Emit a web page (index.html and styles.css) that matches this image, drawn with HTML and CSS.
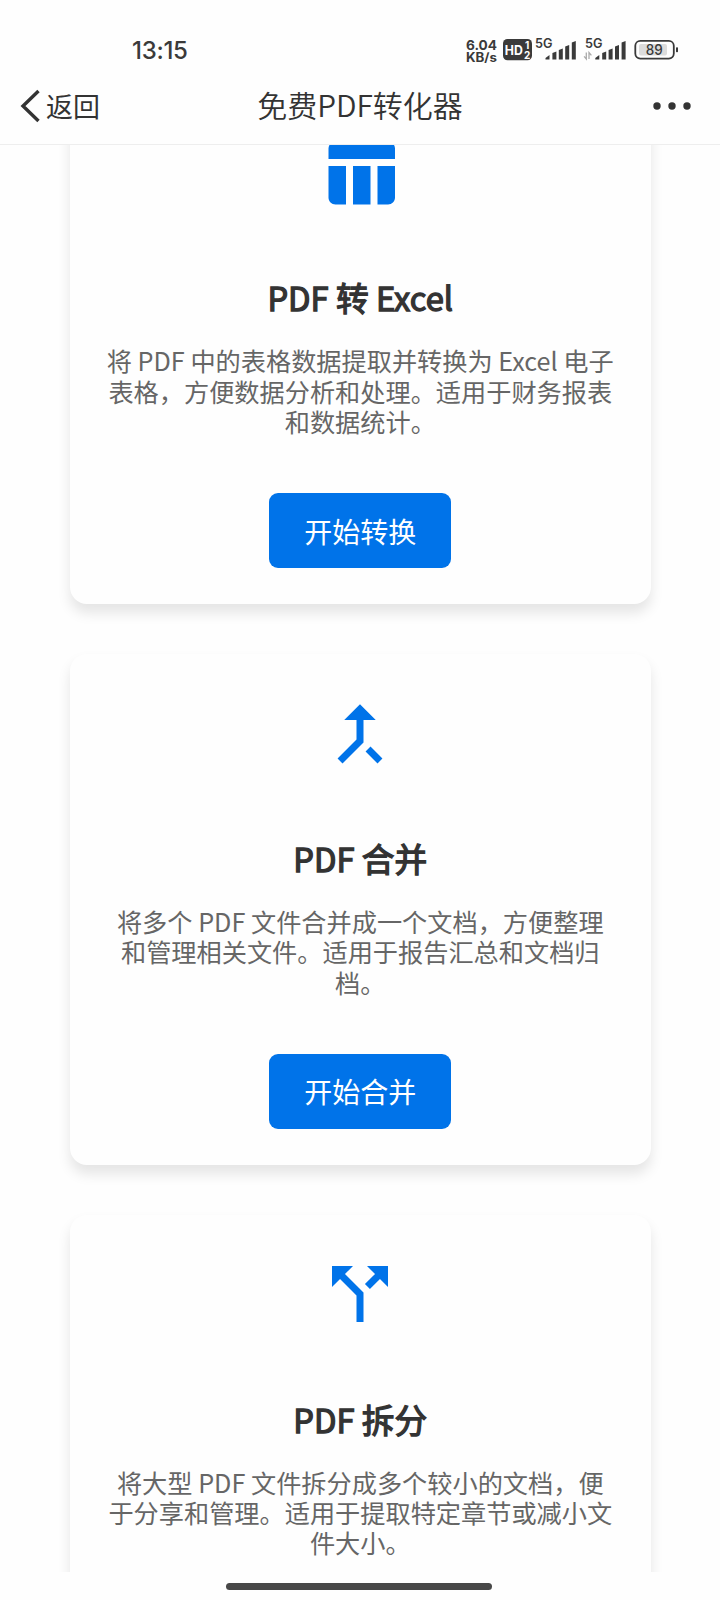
FILE: index.html
```html
<!DOCTYPE html>
<html lang="zh-CN">
<head>
<meta charset="utf-8">
<title>免费PDF转化器</title>
<link rel="stylesheet" href="styles.css">
</head>
<body>
<div class="screen">
  <div class="status">
    <span class="clock">13:15</span>
    <svg class="status-icons" width="216" height="30" viewBox="464 35 216 30" fill="#3a3a3a">
      <g class="tiny">
        <text x="466" y="50.3" font-size="13.5" textLength="31" lengthAdjust="spacingAndGlyphs">6.04</text>
        <text x="466" y="62.2" font-size="12.5" textLength="31" lengthAdjust="spacingAndGlyphs">KB/s</text>
      </g>
      <rect x="503" y="39" width="29" height="21.3" rx="4.5"/>
      <g class="tiny" fill="#fff">
        <text x="504.8" y="54.5" font-size="13" textLength="18" lengthAdjust="spacingAndGlyphs">HD</text>
        <text x="525" y="48.6" font-size="10">1</text>
        <text x="524" y="58.6" font-size="10">2</text>
      </g>
      <g class="tiny medium">
        <text x="535" y="48.3" font-size="13" textLength="17.5" lengthAdjust="spacingAndGlyphs">5G</text>
        <text x="585" y="48.3" font-size="13" textLength="17.5" lengthAdjust="spacingAndGlyphs">5G</text>
      </g>
      <path id="bars" d="M545.5 59.5v-1.500l4-3v4.500zM552.400 59.500v-6.500l4-1.500v8zM558.800 59.500v-9.500l4-1.500v11zM565.200 59.500v-13l4-1.500v14.500zM571.800 59.500v-17l4-1.600v18.600z"/>
      <use href="#bars" x="49.800"/>
      <path d="M586.300 52.500v6.500l-2.200-2.600M589 59v-6.500l2.400 2.800" fill="none" stroke="#aaa" stroke-width="1.300"/>
      <rect x="635.300" y="40.800" width="38.500" height="17.800" rx="5" fill="none" stroke="#3a3a3a" stroke-width="1.800"/>
      <rect x="639" y="44" width="28" height="11.500" rx="2" fill="#dcdcdc"/>
      <rect x="676" y="47.300" width="2" height="5" rx=".8"/>
      <text class="tiny level" x="645.700" y="55" font-size="14.500" textLength="17" lengthAdjust="spacingAndGlyphs">89</text>
    </svg>
  </div>
  <header class="nav">
    <div class="back">
      <svg width="20" height="34" viewBox="0 0 20 34" fill="none" stroke="#333" stroke-width="3.400"><path d="M18.500 2L3 17l15.500 15"/></svg>
      <span>返回</span>
    </div>
    <h1 class="nav-title">免费PDF转化器</h1>
    <svg class="more" width="38" height="8" viewBox="0 0 38 8" fill="#333"><circle cx="4" cy="4" r="3.700"/><circle cx="19" cy="4" r="3.700"/><circle cx="34" cy="4" r="3.700"/></svg>
  </header>
  <main class="page">
    <section class="card">
      <svg class="icon" viewBox="0 0 24 24"><path d="M10 10.020h5V21h-5zM17 21h3c1.100 0 2-.9 2-2v-9h-5v11zm3-18H5c-1.100 0-2 .9-2 2v3h19V5c0-1.100-.9-2-2-2zM3 19c0 1.100.9 2 2 2h3V10.020H3V19z"/></svg>
      <h2 class="title">PDF 转 Excel</h2>
      <p class="desc">将 PDF 中的表格数据提取并转换为 Excel 电子表格，方便数据分析和处理。适用于财务报表和数据统计。</p>
      <button class="btn">开始转换</button>
    </section>
    <section class="card">
      <svg class="icon" viewBox="0 0 24 24"><path d="M17 20.410L18.410 19 15 15.590 13.590 17 17 20.410zM7.500 8H11v5.590L5.590 19 7 20.410l6-6V8h3.500L12 3.500 7.500 8z"/></svg>
      <h2 class="title">PDF 合并</h2>
      <p class="desc">将多个 PDF 文件合并成一个文档，方便整理和管理相关文件。适用于报告汇总和文档归档。</p>
      <button class="btn">开始合并</button>
    </section>
    <section class="card">
      <svg class="icon" viewBox="0 0 24 24"><path d="M14 4l2.290 2.290-2.880 2.880 1.420 1.420 2.880-2.880L20 10V4zm-4 0H4v6l2.290-2.290 4.710 4.700V20h2v-8.410l-5.290-5.300z"/></svg>
      <h2 class="title">PDF 拆分</h2>
      <p class="desc">将大型 PDF 文件拆分成多个较小的文档，便于分享和管理。适用于提取特定章节或减小文件大小。</p>
    </section>
  </main>
  <footer class="gesture"><span class="pill"></span></footer>
</div>
</body>
</html>
```

FILE: styles.css
```css
* { box-sizing: border-box; margin: 0; padding: 0; }
body { background: #fefefe; font-family: "Noto Sans CJK SC", sans-serif; color: #333; }
.screen { width: 720px; height: 1600px; display: flex; flex-direction: column; overflow: hidden; }

.status { height: 70px; flex: none; display: flex; justify-content: space-between; align-items: flex-start; padding: 35px 40px 0 132px; }
.clock { padding-top: 1px; font: 500 24px/30px Inter, sans-serif; letter-spacing: -0.3px; color: #3a3a3a; }
.tiny { font-family: Inter, sans-serif; font-weight: 700; }
.medium { font-weight: 600; }
.level { font-weight: 500; }

.nav { height: 75px; flex: none; display: grid; grid-template-columns: 1fr auto 1fr; align-items: center; padding: 0 29px 3px 20px; border-bottom: 1px solid #eee; }
.back { display: flex; align-items: center; gap: 6px; font-size: 27px; line-height: 36px; }
.nav-title { font-size: 30px; line-height: 40px; font-weight: 350; margin: -3px -9px 0 0; }
.more { justify-self: end; }

.page { height: 1427px; flex: none; overflow: hidden; display: flex; flex-direction: column; align-items: center; gap: 50.400px; }
.card { width: 581px; height: 510.300px; flex: none; background: #fefefe; border-radius: 17px; box-shadow: 0 8.400px 12.600px rgba(0, 0, 0, .1); padding: 37.200px 35.500px 0 36px; display: flex; flex-direction: column; align-items: center; text-align: center; }
.card:first-child { margin-top: -51.300px; }
.icon { width: 84px; height: 84px; fill: #0073e9; flex: none; }
.title { margin-top: 62.500px; font-size: 32.700px; line-height: 40px; font-weight: 400; -webkit-text-stroke: 1.300px #333; }
.desc { margin-top: 28px; font-size: 25.200px; line-height: 30.240px; color: #666; }
.btn { margin-top: 57px; width: 182px; height: 75px; flex: none; border: 0; border-radius: 9px; background: #0073e9; color: #fff; font: 400 28px/34px "Noto Sans CJK SC", sans-serif; }

.gesture { flex: 1; display: flex; justify-content: center; padding: 11px 3px 0 0; }
.pill { width: 266px; height: 7px; border-radius: 4px; background: #484848; }
```
